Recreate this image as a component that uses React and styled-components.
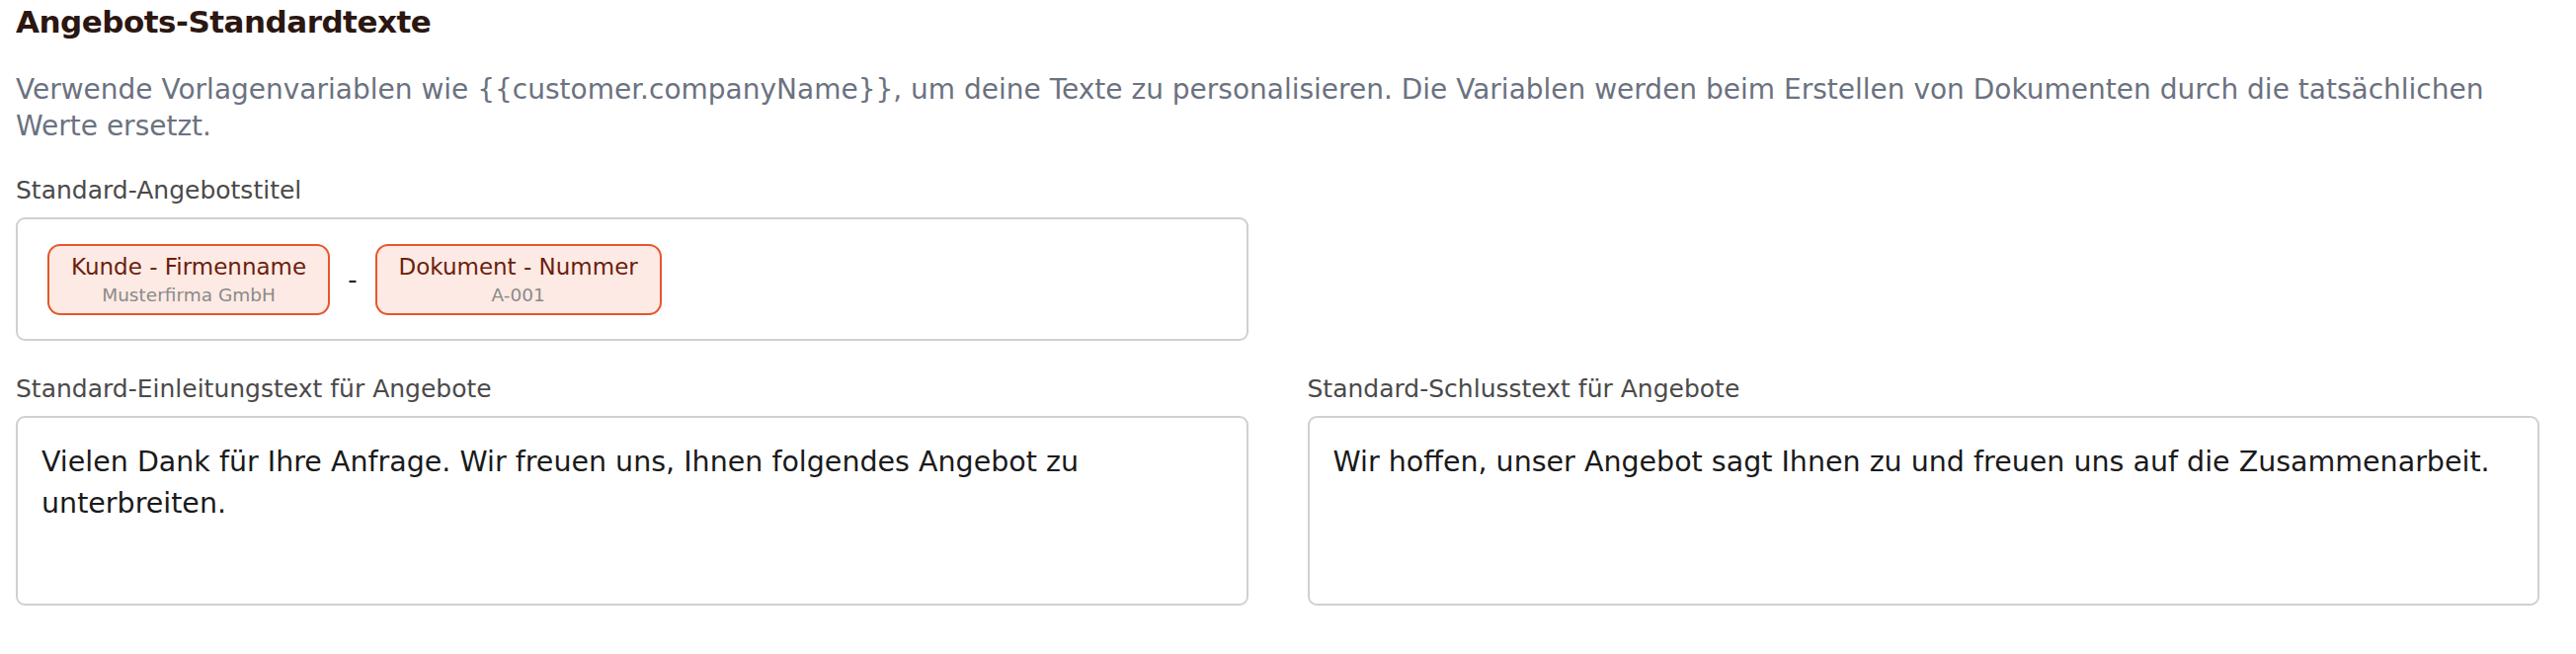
import styled, { createGlobalStyle } from "styled-components";

const GlobalStyle = createGlobalStyle`
  html, body {
    margin: 0;
    padding: 0;
    background: #ffffff;
  }
  body {
    font-family: "DejaVu Sans", "Liberation Sans", sans-serif;
  }
`;

const Page = styled.section`
  padding: 2px 37px 40px 16px;
`;

const Heading = styled.h2`
  margin: 0;
  font-size: 31px;
  line-height: 40px;
  font-weight: 700;
  letter-spacing: -0.5px;
  color: #2b1711;
`;

const Description = styled.p`
  margin: 30px 0 0;
  font-size: 28px;
  line-height: 37px;
  color: #6b7280;
`;

const FieldGrid = styled.div`
  margin-top: 32px;
  display: grid;
  grid-template-columns: 1fr 1fr;
  column-gap: 60px;
  row-gap: 34px;
`;

const Field = styled.div`
  display: flex;
  flex-direction: column;
  gap: 12px;
  min-width: 0;
`;

const Label = styled.label`
  font-size: 25px;
  line-height: 30px;
  color: #4a4a4a;
`;

const TitleBox = styled.div`
  display: flex;
  align-items: center;
  gap: 18px;
  height: 125px;
  box-sizing: border-box;
  padding: 0 30px;
  border: 2px solid #d0d0d0;
  border-radius: 9px;
  background: #fff;
`;

const Chip = styled.div`
  display: flex;
  flex-direction: column;
  align-items: center;
  justify-content: center;
  gap: 2px;
  height: 72px;
  box-sizing: border-box;
  padding: 0 22px;
  border: 2px solid #e6562b;
  border-radius: 13px;
  background: #fdeae4;
`;

const ChipTitle = styled.span`
  font-size: 23px;
  line-height: 30px;
  color: #6b1e0e;
`;

const ChipValue = styled.span`
  font-size: 18.5px;
  line-height: 24px;
  color: #8a8a8a;
`;

const Separator = styled.span`
  font-size: 26px;
  color: #222;
`;

const TextArea = styled.textarea`
  display: block;
  width: 100%;
  height: 192px;
  box-sizing: border-box;
  padding: 24px 24px;
  border: 2px solid #d0d0d0;
  border-radius: 9px;
  resize: none;
  font-family: inherit;
  font-size: 28.5px;
  line-height: 42px;
  color: #1a1a1a;
  background: #fff;
  outline: none;
`;

const intro =
  "Verwende Vorlagenvariablen wie {{customer.companyName}}, um deine Texte zu personalisieren. Die Variablen werden beim Erstellen von Dokumenten durch die tatsächlichen Werte ersetzt.";

const placeholders = [
  { title: "Kunde - Firmenname", value: "Musterfirma GmbH" },
  { title: "Dokument - Nummer", value: "A-001" },
];

export default function App() {
  return (
    <>
      <GlobalStyle />
      <Page>
        <Heading>Angebots-Standardtexte</Heading>
        <Description>{intro}</Description>
        <FieldGrid>
          <Field>
            <Label>Standard-Angebotstitel</Label>
            <TitleBox>
              <Chip>
                <ChipTitle>{placeholders[0].title}</ChipTitle>
                <ChipValue>{placeholders[0].value}</ChipValue>
              </Chip>
              <Separator>-</Separator>
              <Chip>
                <ChipTitle>{placeholders[1].title}</ChipTitle>
                <ChipValue>{placeholders[1].value}</ChipValue>
              </Chip>
            </TitleBox>
          </Field>
          <div />
          <Field>
            <Label>Standard-Einleitungstext für Angebote</Label>
            <TextArea defaultValue="Vielen Dank für Ihre Anfrage. Wir freuen uns, Ihnen folgendes Angebot zu unterbreiten." />
          </Field>
          <Field>
            <Label>Standard-Schlusstext für Angebote</Label>
            <TextArea defaultValue="Wir hoffen, unser Angebot sagt Ihnen zu und freuen uns auf die Zusammenarbeit." />
          </Field>
        </FieldGrid>
      </Page>
    </>
  );
}
